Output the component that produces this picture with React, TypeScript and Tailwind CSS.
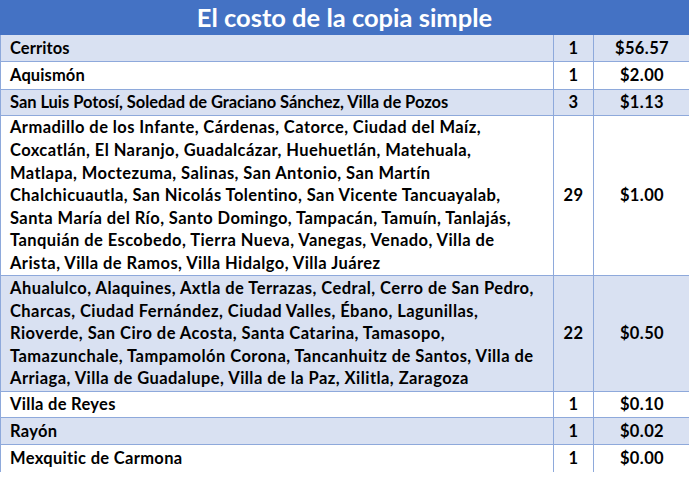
const rows: { lines: string[]; count: string; price: string; h: string; shade: boolean; track: string }[] = [
  { lines: ["Cerritos"], count: "1", price: "$56.57", h: "h-[27px]", shade: true, track: "tracking-[0.1px]" },
  { lines: ["Aquismón"], count: "1", price: "$2.00", h: "h-[28px]", shade: false, track: "tracking-[0.1px]" },
  {
    lines: ["San Luis Potosí, Soledad de Graciano Sánchez, Villa de Pozos"],
    count: "3",
    price: "$1.13",
    h: "h-[26px]",
    shade: true,
    track: "tracking-[-0.05px]",
  },
  {
    lines: [
      "Armadillo de los Infante, Cárdenas, Catorce, Ciudad del Maíz,",
      "Coxcatlán, El Naranjo, Guadalcázar, Huehuetlán, Matehuala,",
      "Matlapa, Moctezuma, Salinas, San Antonio, San Martín",
      "Chalchicuautla, San Nicolás Tolentino, San Vicente Tancuayalab,",
      "Santa María del Río, Santo Domingo, Tampacán, Tamuín, Tanlajás,",
      "Tanquián de Escobedo, Tierra Nueva, Vanegas, Venado, Villa de",
      "Arista, Villa de Ramos, Villa Hidalgo, Villa Juárez",
    ],
    count: "29",
    price: "$1.00",
    h: "h-[160px]",
    shade: false,
    track: "tracking-[0.43px]",
  },
  {
    lines: [
      "Ahualulco, Alaquines, Axtla de Terrazas, Cedral, Cerro de San Pedro,",
      "Charcas, Ciudad Fernández, Ciudad Valles, Ébano, Lagunillas,",
      "Rioverde, San Ciro de Acosta, Santa Catarina, Tamasopo,",
      "Tamazunchale, Tampamolón Corona, Tancanhuitz de Santos, Villa de",
      "Arriaga, Villa de Guadalupe, Villa de la Paz, Xilitla, Zaragoza",
    ],
    count: "22",
    price: "$0.50",
    h: "h-[116px]",
    shade: true,
    track: "tracking-[0.45px]",
  },
  { lines: ["Villa de Reyes"], count: "1", price: "$0.10", h: "h-[26px]", shade: false, track: "tracking-[0.3px]" },
  { lines: ["Rayón"], count: "1", price: "$0.02", h: "h-[27px]", shade: true, track: "tracking-[0.3px]" },
  { lines: ["Mexquitic de Carmona"], count: "1", price: "$0.00", h: "h-[27px]", shade: false, track: "tracking-[0.32px]" },
];

export default function App() {
  return (
    <div className="w-[689px] h-[493px] bg-white overflow-hidden font-['Lato',sans-serif] font-bold text-black">
      <div className="h-[35px] bg-[#4472c4] flex items-center justify-center text-white text-[25.5px] leading-none">
        El costo de la copia simple
      </div>
      <div className="border-l border-[#8ea9db]">
        {rows.map((r, i) => (
          <div
            key={i}
            className={`grid grid-cols-[553px_40px_96px] border-[#8ea9db] text-[16.5px] ${r.h} ${
              i < rows.length - 1 ? "border-b" : ""
            } ${r.shade ? "bg-[#d9e1f2]" : "bg-white"}`}
          >
            <div
              className={`flex flex-col justify-center pl-[9px] leading-[22.6px] whitespace-nowrap border-r border-[#8ea9db] ${r.track}`}
            >
              {r.lines.map((l, j) => (
                <span key={j}>{l}</span>
              ))}
            </div>
            <div className="flex items-center justify-center tracking-[0.4px] border-r border-[#8ea9db]">{r.count}</div>
            <div className="flex items-center justify-center tracking-[0.4px]">{r.price}</div>
          </div>
        ))}
      </div>
    </div>
  );
}
